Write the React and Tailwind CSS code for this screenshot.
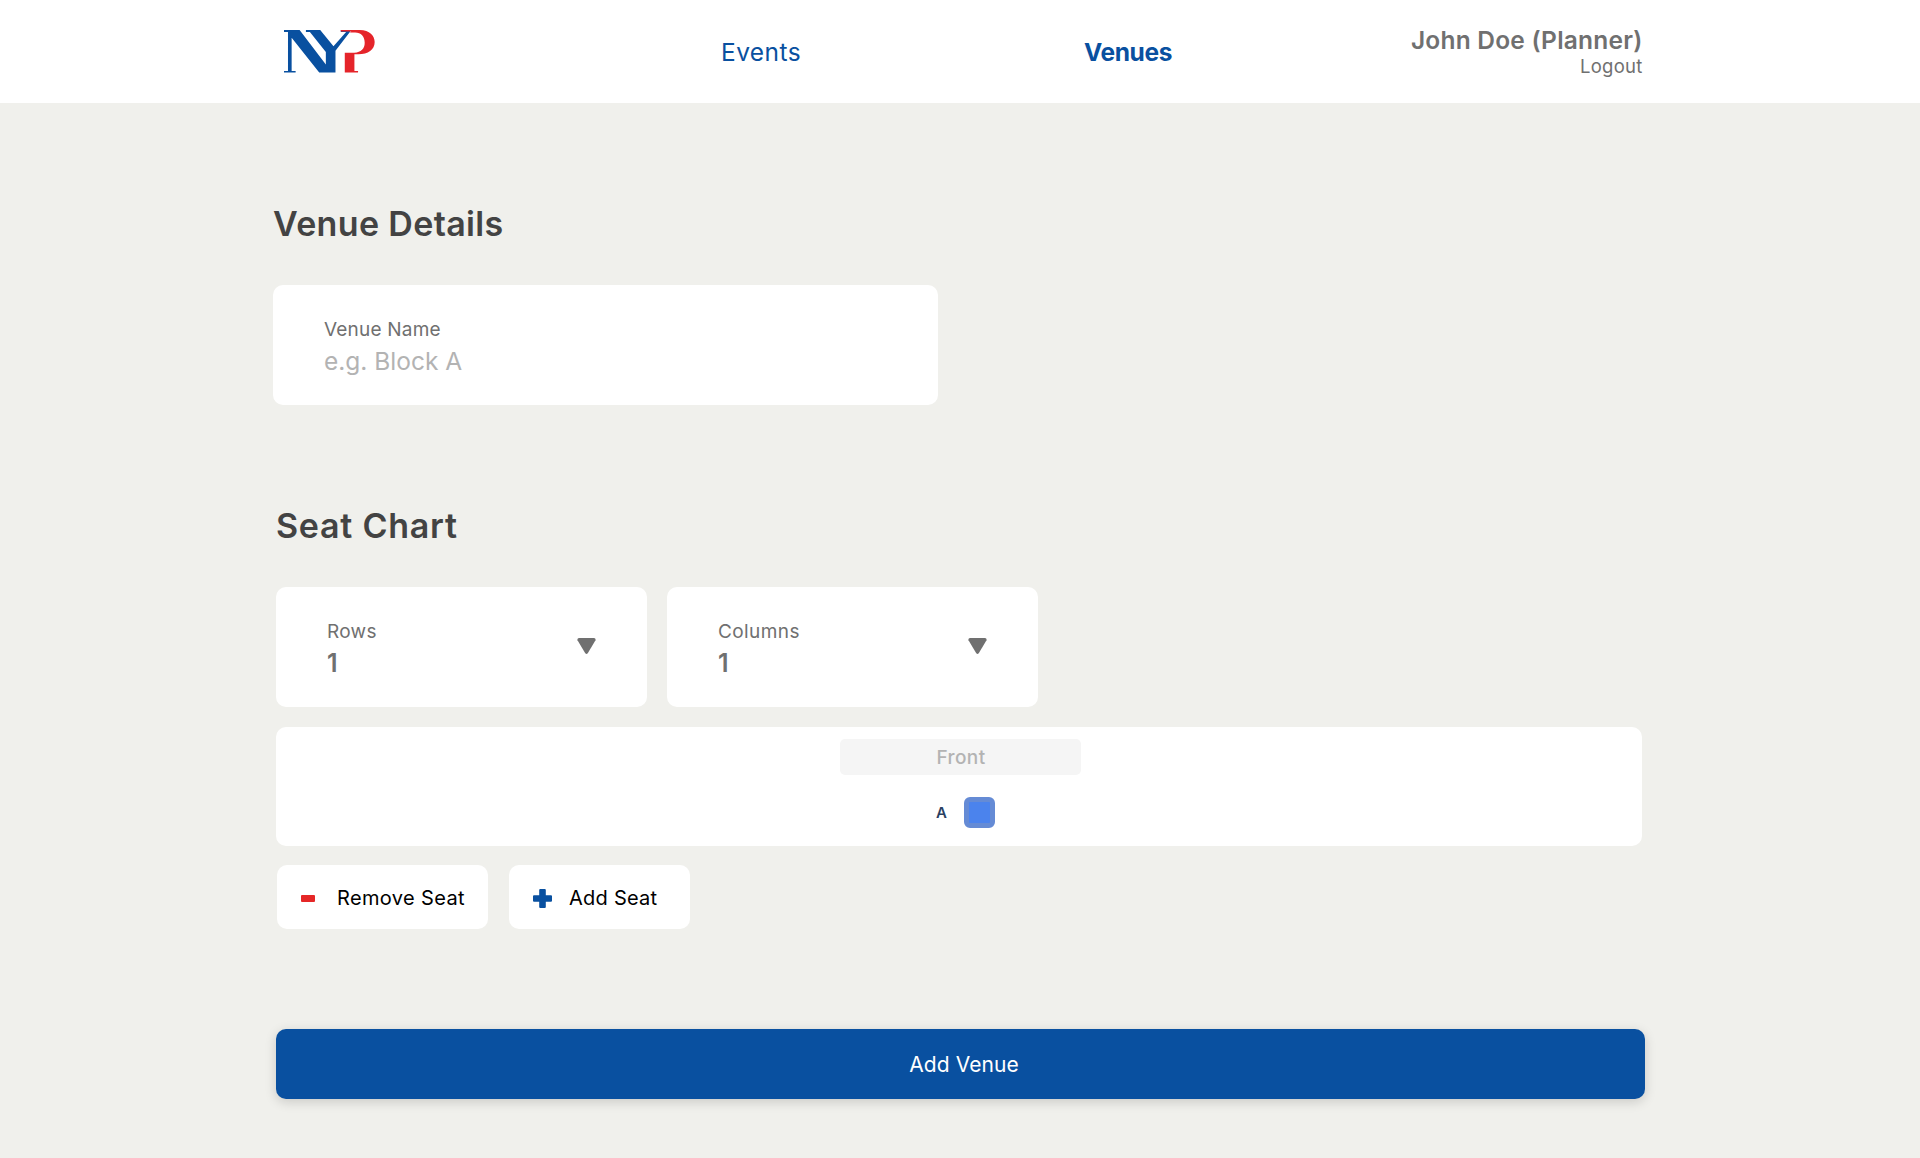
import React from "react";

function Logo() {
  return (
    <svg viewBox="72 59 274 129" className="h-[43px] w-[91px] shrink-0" role="img" aria-label="NYP">
      <path
        fill="#0950a0"
        d="M72 59H119L198 163V125L150 65H138V59H181L221 108L259 65H243V59H275L227 121V187H178L95 82V182H107V187H72V182H84V65H72Z"
      />
      <path
        fill="#e5242a"
        fillRule="evenodd"
        d="M243 59H300C330 60 345 76 345 95C345 118 325 132 296 132H284V182H295V187H255V127H284C304 126 315 115 315 97C315 78 304 66 286 66H270L275 63H243Z"
      />
    </svg>
  );
}

function Header() {
  return (
    <header className="flex h-[103px] items-center bg-white pl-[284px] pr-[277.5px]">
      <Logo />
      <nav className="ml-[346px] flex text-[24.5px] leading-[30px] text-[#0950a0]">
        <a className="w-[363px] tracking-[0.42px]">Events</a>
        <a className="font-bold tracking-[-0.35px]">Venues</a>
      </nav>
      <div className="ml-auto flex flex-col items-end pt-[1px] text-[#707070]">
        <span className="text-[24.5px] font-semibold leading-[29px] tracking-[0.22px]">John Doe (Planner)</span>
        <a className="-mt-px pb-px text-[18.5px] leading-[24px] tracking-[0.24px]">Logout</a>
      </div>
    </header>
  );
}

function Heading({ children }) {
  return (
    <h2 className="mb-[41px] whitespace-nowrap text-[34px] font-semibold leading-[40px] text-[#434343]">{children}</h2>
  );
}

function SelectCard({ label, value }) {
  return (
    <div className="flex h-[120px] w-[371px] justify-between rounded-[10px] bg-white pl-[51px] pr-[51px] pt-[33px] text-[#707070]">
      <div>
        <div className="text-[19px] leading-[24px]">{label}</div>
        <div className="mt-[3px] text-[25px] font-semibold leading-[32px]">{value}</div>
      </div>
      <svg viewBox="0 0 19 16" className="mt-[18px] h-4 w-[19px]" fill="#707070">
        <path d="M2 0H17Q19 .3 18.5 2.2L10.9 15Q9.5 16.8 8.1 15L.5 2.2Q0 .3 2 0Z" />
      </svg>
    </div>
  );
}

export default function App() {
  return (
    <div className="min-h-[1158px] bg-[#f0f0ec] font-['Inter',sans-serif]">
      <Header />
      <main className="pt-[101px]">
        <section className="ml-[273px]">
          <Heading>
            <span className="tracking-[0.35px]">Venue Details</span>
          </Heading>
          <div className="h-[120px] w-[665px] rounded-[10px] bg-white pl-[51px] pt-[33px]">
            <div className="text-[19px] leading-[24px] tracking-[0.2px] text-[#707070]">Venue Name</div>
            <div className="mt-[3px] text-[24.5px] leading-[32px] text-[#b3b3b3]">e.g. Block A</div>
          </div>
        </section>

        <section className="ml-[276px] mt-[101px]">
          <Heading>
            <span className="tracking-[0.75px]">Seat Chart</span>
          </Heading>
          <div className="flex gap-5">
            <SelectCard label={<span className="tracking-[0.3px]">Rows</span>} value="1" />
            <SelectCard label={<span className="tracking-[0.4px]">Columns</span>} value="1" />
          </div>

          <div className="mt-5 flex h-[119px] w-[1366px] flex-col items-center rounded-[10px] bg-white pl-[3px] pt-[12px]">
            <div className="flex h-[36px] w-[241px] items-center justify-center rounded-[5px] bg-[#f5f5f5] pl-px pt-[3px] text-[19px] font-medium tracking-[0.4px] text-[#b3b3b3]">
              Front
            </div>
            <div className="mt-[22px] flex items-center gap-[17px] pl-[10px]">
              <span className="text-[15px] font-semibold leading-[31px] text-[#2b4062]">A</span>
              <span className="size-[31px] rounded-[6px] border-[5px] border-[#658bd5] bg-[#4b83ed]" />
            </div>
          </div>

          <div className="ml-px mt-[19px] flex gap-[21px] text-[20px] text-black">
            <button className="flex h-16 w-[211px] items-center rounded-[10px] bg-white pl-[24px]">
              <span className="mt-[3px] h-[7px] w-[14px] rounded-[1px] bg-[#e52727]" />
              <span className="ml-[22px] pt-px tracking-[0.36px]">Remove Seat</span>
            </button>
            <button className="flex h-16 w-[181px] items-center rounded-[10px] bg-white pl-[24px]">
              <svg viewBox="0 0 19 19" className="mt-[3px] size-[19px]" fill="#0950a0">
                <path d="M7.2 0H11.8Q12.8 0 12.8 1V6.3H18Q19 6.3 19 7.3V11.7Q19 12.7 18 12.7H12.8V18Q12.8 19 11.8 19H7.2Q6.2 19 6.2 18V12.7H1Q0 12.7 0 11.7V7.3Q0 6.3 1 6.3H6.2V1Q6.2 0 7.2 0Z" />
              </svg>
              <span className="ml-[17px] pt-px tracking-[0.24px]">Add Seat</span>
            </button>
          </div>

          <button className="mt-[100px] flex h-[70px] w-[1369px] items-center justify-center rounded-[10px] bg-[#0950a0] pl-[7px] pt-px text-[21px] tracking-[0.06px] text-white shadow-[0_3px_12px_rgba(0,0,0,0.16)]">
            Add Venue
          </button>
        </section>
      </main>
    </div>
  );
}
